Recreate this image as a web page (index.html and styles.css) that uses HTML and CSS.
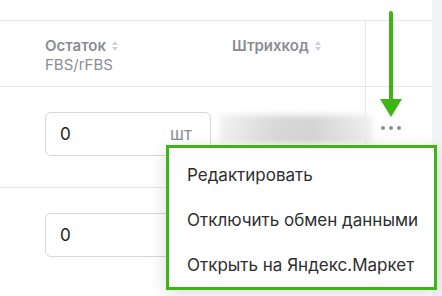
FILE: index.html
```html
<!DOCTYPE html>
<html lang="ru">
<head>
    <meta charset="UTF-8">
    <meta name="viewport" content="width=device-width, initial-scale=1.0">
    <title>Товары</title>
    <link rel="stylesheet" href="styles.css">
</head>
<body>
    <div class="page">
        <div class="table-wrap">
            <div class="table">
                <div class="row head">
                    <div class="cell col-stock">
                        <span class="th">Остаток <span class="sort"></span></span>
                        <span class="th-sub">FBS/rFBS</span>
                    </div>
                    <div class="cell col-barcode">
                        <span class="th">Штрихкод <span class="sort"></span></span>
                    </div>
                    <div class="cell col-actions"></div>
                </div>

                <div class="row body">
                    <div class="cell col-stock">
                        <div class="qty-input">
                            <span class="qty-value">0</span>
                            <span class="qty-unit">шт</span>
                        </div>
                    </div>
                    <div class="cell col-barcode">
                        <div class="barcode-blur"></div>
                    </div>
                    <div class="cell col-actions">
                        <span class="dots"><i></i><i></i><i></i></span>
                    </div>
                </div>

                <div class="row body">
                    <div class="cell col-stock">
                        <div class="qty-input">
                            <span class="qty-value">0</span>
                            <span class="qty-unit">шт</span>
                        </div>
                    </div>
                    <div class="cell col-barcode"></div>
                    <div class="cell col-actions"></div>
                </div>
            </div>
            <div class="scroll-strip"></div>
        </div>

        <!-- выпадающее меню действий -->
        <ul class="action-menu">
            <li>Редактировать</li>
            <li>Отключить обмен данными</li>
            <li>Открыть на Яндекс.Маркет</li>
        </ul>

        <svg class="hint-arrow" width="30" height="120" viewBox="0 0 30 120">
            <line x1="15" y1="13" x2="15" y2="102" stroke="#3db512" stroke-width="4" stroke-linecap="round"/>
            <polygon points="4,99 26,99 15,117" fill="#3db512"/>
        </svg>
    </div>
</body>
</html>
```

FILE: styles.css
```css
* {
    box-sizing: border-box;
}

body {
    margin: 0;
    font-family: 'Inter', 'Noto Sans', sans-serif;
    background-color: #ffffff;
    color: #2b2b2b;
    width: 442px;
    height: 296px;
    overflow: hidden;
}

.page {
    position: relative;
    width: 442px;
    height: 296px;
}

.table-wrap {
    display: flex;
    height: 100%;
}

.table {
    width: 432px;
    padding-top: 20px;
}

.scroll-strip {
    width: 10px;
    background-color: #f3f4f6;
}

.row {
    display: grid;
    grid-template-columns: 220px 146px 66px;
    border-top: 1px solid #e6e7ea;
}

.row.head {
    height: 66px;
}

.row.body {
    height: 101px;
}

.cell {
    border-right: 1px solid transparent;
}

.col-barcode {
    border-right-color: #e6e7ea;
}

.head .col-stock {
    padding: 15px 0 0 45px;
}

.head .col-barcode {
    padding: 15px 0 0 12px;
}

.th {
    display: flex;
    align-items: center;
    gap: 6px;
    font-size: 15px;
    font-weight: 600;
    line-height: 19px;
    color: #8b8d92;
}

.th-sub {
    display: block;
    font-size: 15px;
    line-height: 19px;
    color: #8b8d92;
}

.sort {
    position: relative;
    width: 6px;
    height: 10px;
}

.sort::before,
.sort::after {
    content: '';
    position: absolute;
    left: 0;
    border-left: 3px solid transparent;
    border-right: 3px solid transparent;
}

.sort::before {
    top: 0;
    border-bottom: 4px solid #cfd1d5;
}

.sort::after {
    bottom: 0;
    border-top: 4px solid #cfd1d5;
}

.body .col-stock {
    padding: 25px 0 0 45px;
}

.qty-input {
    width: 166px;
    height: 44px;
    border: 1px solid #d6d8dc;
    border-radius: 6px;
    display: flex;
    align-items: baseline;
    justify-content: space-between;
    padding: 0 18px 0 14px;
    line-height: 42px;
}

.qty-value {
    font-size: 17px;
    color: #222;
}

.qty-unit {
    font-size: 17px;
    color: #8b8d92;
}

.body .col-barcode {
    padding-top: 28px;
}

.barcode-blur {
    width: 152px;
    height: 28px;
    background: linear-gradient(90deg, #f2f2f2 0%, #d9d9d9 35%, #d4d4d4 60%, #e8e8e8 90%, #f0f0f0 100%);
    filter: blur(3px);
}

.body .col-actions {
    padding: 39px 0 0 15px;
}

.dots {
    display: flex;
    gap: 4px;
}

.dots i {
    width: 4px;
    height: 4px;
    border-radius: 50%;
    background-color: #8e9097;
}

.action-menu {
    position: absolute;
    left: 166px;
    top: 145px;
    width: 271px;
    height: 145px;
    margin: 0;
    padding: 5px 0 0 0;
    list-style: none;
    background-color: #ffffff;
    border: 3px solid #3db512;
    box-shadow: 0 4px 18px rgba(0, 0, 0, 0.14);
}

.action-menu li {
    height: 45px;
    line-height: 45px;
    padding-left: 18px;
    font-size: 17px;
    color: #2e2e2e;
    white-space: nowrap;
}

.hint-arrow {
    position: absolute;
    left: 376px;
    top: 0;
}
```
